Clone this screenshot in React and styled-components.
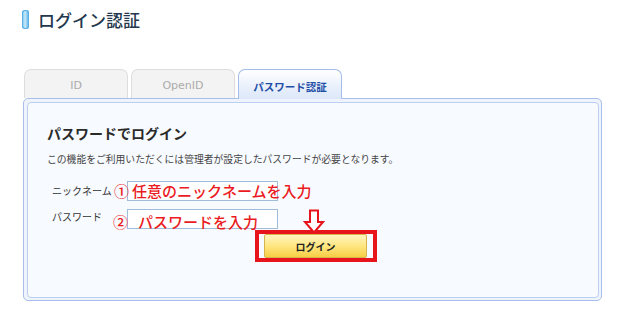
import React from "react";
import styled, { createGlobalStyle } from "styled-components";

const Global = createGlobalStyle`
  html, body { margin: 0; padding: 0; background: #ffffff; }
  body { font-family: "Noto Sans CJK JP", "Noto Sans", sans-serif; color: #333; }
`;

const Page = styled.div`
  width: 623px;
  height: 326px;
  box-sizing: border-box;
  padding: 10px 0 0 22px;
  overflow: hidden;
`;

const TitleRow = styled.h1`
  display: flex;
  align-items: center;
  gap: 9px;
  margin: 0;
  height: 19px;
  font-size: 17px;
  font-weight: 500;
  color: #23384e;
  line-height: 19px;
`;

const TitleBar = styled.span`
  display: block;
  width: 7px;
  height: 19px;
  border-radius: 3px;
  background: linear-gradient(to right, #6fc0ef, #c7e9fb 45%, #4aa9e4);
  box-shadow: inset 0 0 0 1px #5aaee3;
`;

const Tabs = styled.ul`
  display: flex;
  gap: 3px;
  list-style: none;
  margin: 40px 0 0 2px;
  padding: 0;
  height: 29px;
  position: relative;
  z-index: 1;
`;

const Tab = styled.li`
  box-sizing: border-box;
  width: 104px;
  height: ${(p) => (p.$active ? "30px" : "29px")};
  display: flex;
  align-items: center;
  justify-content: center;
  border: 1px solid ${(p) => (p.$active ? "#a4bce9" : "#dddddd")};
  border-bottom: none;
  border-radius: 7px 7px 0 0;
  background: ${(p) =>
    p.$active
      ? "linear-gradient(to bottom, #ffffff 0%, #eef3fc 45%, #dce7f9 100%)"
      : "#f3f3f3"};
  color: ${(p) => (p.$active ? "#1f4ea6" : "#ababab")};
  font-family: "DejaVu Sans", "Noto Sans CJK JP", sans-serif;
  font-size: ${(p) => (p.$active ? "10.5px" : "11px")};
  font-weight: ${(p) => (p.$active ? "bold" : "normal")};
  padding-top: 3px;
`;

const PanelOuter = styled.div`
  box-sizing: border-box;
  width: 579px;
  height: 203px;
  margin-left: 1px;
  border: 1px solid #a7bfea;
  border-radius: 5px;
  padding: 3px 2px 2px 3px;
  background: #eef3fc;
`;

const PanelInner = styled.div`
  box-sizing: border-box;
  height: 100%;
  border: 1px solid #bccff1;
  border-radius: 4px;
  background: #f7faff;
  padding: 20px 0 0 19px;
`;

const Heading = styled.h2`
  margin: 0;
  font-size: 14px;
  line-height: 20px;
  font-weight: bold;
  color: #2a2a2a;
`;

const Desc = styled.p`
  margin: 9px 0 0 0;
  font-size: 9.8px;
  line-height: 14px;
  color: #444;
`;

const Form = styled.div`
  display: flex;
  flex-direction: column;
  gap: 8px;
  margin-top: 15px;
  padding-left: 5px;
`;

const Row = styled.div`
  display: flex;
  align-items: ${(p) => (p.$top ? "flex-start" : "center")};
  position: relative;
  height: 20px;
`;

const Label = styled.span`
  width: 75px;
  font-size: 10px;
  color: #333;
  line-height: 14px;
  padding-top: ${(p) => (p.$top ? "1px" : "0")};
`;

const Input = styled.div`
  box-sizing: border-box;
  width: 151px;
  height: 20px;
  border: 1px solid #9fbcd8;
  background: #ffffff;
`;

const Note = styled.div`
  position: absolute;
  left: ${(p) => p.$left}px;
  top: ${(p) => p.$top}px;
  display: flex;
  align-items: center;
  color: #ea1b22;
  font-size: 15px;
  font-weight: 500;
  line-height: 20px;
  white-space: nowrap;
  pointer-events: none;
`;

const Num = styled.span`
  margin-right: ${(p) => p.$gap}px;
`;

const Arrow = styled.svg`
  position: absolute;
  left: 251px;
  top: 0px;
`;

const ButtonRow = styled.div`
  display: flex;
  margin-top: 1px;
  padding-left: 208px;
`;

const RedFrame = styled.div`
  box-sizing: border-box;
  width: 122px;
  height: 32px;
  border: 4px solid #e8141c;
  display: flex;
  align-items: stretch;
  padding: 0 6px 0 5px;
`;

const LoginButton = styled.button`
  flex: 1;
  border: 1px solid #d7b54c;
  border-radius: 2px;
  background: linear-gradient(to bottom, #fff5c2 0%, #ffe680 50%, #f7cf46 100%);
  font-family: "Noto Sans CJK JP", sans-serif;
  font-size: 10px;
  font-weight: bold;
  color: #222;
  padding: 0;
  cursor: pointer;
`;

export default function App() {
  return (
    <>
      <Global />
      <Page>
        <TitleRow>
          <TitleBar />
          ログイン認証
        </TitleRow>
        <Tabs>
          <Tab>ID</Tab>
          <Tab>OpenID</Tab>
          <Tab $active>パスワード認証</Tab>
        </Tabs>
        <PanelOuter>
          <PanelInner>
            <Heading>パスワードでログイン</Heading>
            <Desc>この機能をご利用いただくには管理者が設定したパスワードが必要となります。</Desc>
            <Form>
              <Row>
                <Label>ニックネーム</Label>
                <Input />
                <Note $left={62} $top={0}>
                  <Num $gap={3}>①</Num>任意のニックネームを入力
                </Note>
              </Row>
              <Row $top>
                <Label $top>パスワード</Label>
                <Input />
                <Note $left={61} $top={3}>
                  <Num $gap={10}>②</Num>パスワードを入力
                </Note>
                <Arrow width="22" height="25" viewBox="0 0 22 25">
                  <path
                    d="M7 1.5 H15 V13 H20 L11 23.5 L2 13 H7 Z"
                    fill="#ffffff"
                    stroke="#e8141c"
                    strokeWidth="2"
                    strokeLinejoin="miter"
                  />
                </Arrow>
              </Row>
            </Form>
            <ButtonRow>
              <RedFrame>
                <LoginButton>ログイン</LoginButton>
              </RedFrame>
            </ButtonRow>
          </PanelInner>
        </PanelOuter>
      </Page>
    </>
  );
}
